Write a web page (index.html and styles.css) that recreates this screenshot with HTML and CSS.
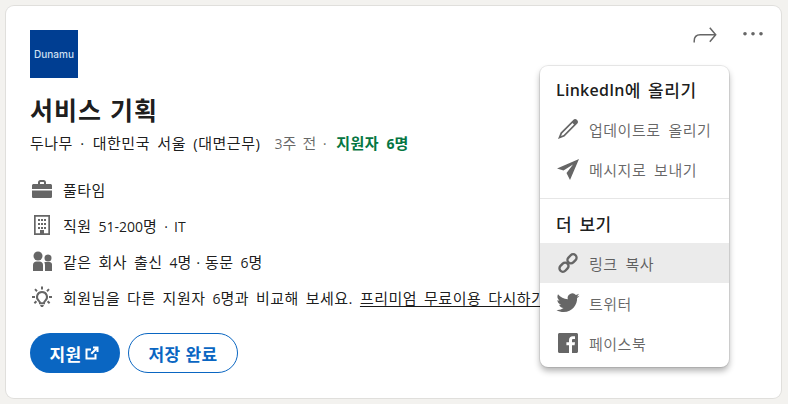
FILE: index.html
```html
<!DOCTYPE html>
<html lang="ko">
<head>
<meta charset="utf-8">
<title>서비스 기획</title>
<link rel="stylesheet" href="styles.css">
</head>
<body>
<main class="card">
  <div class="actions">
    <svg class="share" viewBox="0 0 24 24" width="24" height="24"><path d="M1.200 20.500v-1.500c0-3.800 2.300-6.300 6-6.300H22.500M16.800 5.700l5.900 7-5.900 7" fill="none" stroke="#666" stroke-width="1.500"/></svg>
    <svg class="more" viewBox="0 0 24 24" width="24" height="24"><circle cx="4" cy="11.700" r="1.800" fill="#666"/><circle cx="12" cy="11.700" r="1.800" fill="#666"/><circle cx="20" cy="11.700" r="1.800" fill="#666"/></svg>
  </div>
  <div class="logo"><span>Dunamu</span></div>
  <h1>서비스 기획</h1>
  <p class="meta"><span>두나무 ·</span><span class="loc">대한민국 서울 (대면근무)</span><span class="time"><span class="lat">3</span>주 전 ·</span><strong>지원자 <span class="lat">6</span>명</strong></p>
  <ul class="facts">
    <li><svg viewBox="0 0 24 24" width="24" height="24"><path d="M2 12V8.600C2 7.700 2.700 7 3.600 7H8V5.400C8 4 9 3 10.400 3h3.200C15 3 16 4 16 5.400V7h4.400C21.300 7 22 7.700 22 8.600V12zM10 7h4V5.500c0-.3-.2-.5-.5-.5h-3c-.3 0-.5.2-.5.500zM2 13.500h20v5.900c0 .9-.7 1.600-1.600 1.600H3.600C2.700 21 2 20.300 2 19.400z" fill="#666" fill-rule="evenodd"/></svg><span>풀타임</span></li>
    <li><svg viewBox="0 0 24 24" width="24" height="24"><path d="M4 2h16v20H4zM5.700 3.700v16.600h4.300V17h4v3.300h4.300V3.700zM8 6h2v2H8zm3 0h2v2h-2zm3 0h2v2h-2zM8 10h2v2H8zm3 0h2v2h-2zm3 0h2v2h-2zM8 14h2v2H8zm3 0h2v2h-2zm3 0h2v2h-2z" fill="#666" fill-rule="evenodd"/></svg><span>직원 <span class="lat">51-200</span>명 <span class="lat">· IT</span></span></li>
    <li><svg viewBox="0 0 24 24" width="24" height="24"><circle cx="8" cy="7" r="4.500" fill="#666"/><circle cx="18" cy="9" r="3.500" fill="#666"/><path d="M3 22v-6c0-2 1.500-3.500 3.500-3.500h3c2 0 3.500 1.500 3.500 3.500v6zM15 22v-6c0-1.200-.3-2-.8-2.600.6-.3 1.300-.4 2-.4h3.300c1.500 0 2.500 1 2.500 2.500V22z" fill="#666"/></svg><span>같은 회사 출신 <span class="lat">4</span>명<span class="dot"> · </span>동문 <span class="lat">6</span>명</span></li>
    <li><svg viewBox="0 0 24 24" width="24" height="24"><path d="M12 7a5 5 0 0 0-3 9c.7.600 1 1.200 1 2.200h4c0-1 .3-1.600 1-2.200a5 5 0 0 0-3-9z" fill="none" stroke="#666" stroke-width="2"/><path d="M10 20h4l-1 2h-2zM11 1.500h2v3h-2zM4.300 4.800l1.400-1.400L7.700 5.500 6.300 6.900zM18.300 3.400l1.400 1.400-2 2.100-1.400-1.400zM2 11h3v2H2zM19 11h3v2h-3zM5.700 15.600l1.400 1.400-2 2-1.400-1.400zM18.300 15.600l2 2-1.400 1.400-2-2z" fill="#666"/></svg><span class="clip">회원님을 다른 지원자 <span class="lat">6</span>명과 비교해 보세요. <u>프리미엄 무료이용 다시하기</u></span></li>
  </ul>
  <div class="buttons">
    <button class="btn primary">지원 <svg viewBox="0 0 16 16" width="16" height="16"><path d="M9 1.500h5.500V7h-2V5L8 9.500 6.500 8 11 3.500H9zM1.500 3.500H7v2H3.500v7h7V9h2v5.500h-11z" fill="#fff"/></svg></button>
    <button class="btn outline">저장 완료</button>
  </div>
  <nav class="menu">
    <h2 class="first"><span class="lat-h">LinkedIn</span>에 올리기</h2>
    <a class="item"><svg viewBox="0 0 24 24" width="24" height="24"><path d="M21.100 2.900c-1.200-1.200-2.800-1.200-3.900 0L4.600 15.500 2 22l6.500-2.600L21.100 6.800c1.200-1.100 1.200-2.700 0-3.900zM7.600 18l-2.500 1 1-2.500L16.500 6l1.500 1.500z" fill="#666" fill-rule="evenodd"/></svg><span>업데이트로 올리기</span></a>
    <a class="item"><svg viewBox="0 0 24 24" width="24" height="24"><path d="M23 2 1 11.500l6.500 2L17 7.500 10.500 16 14 23z" fill="#666"/></svg><span>메시지로 보내기</span></a>
    <hr>
    <h2>더 보기</h2>
    <a class="item active"><svg viewBox="0 0 24 24" width="24" height="24"><g fill="none" stroke="#666" stroke-width="2.400"><rect x="3" y="12.800" width="10" height="6.800" rx="3.400" transform="rotate(-45 8 16.200)"/><rect x="11" y="4.400" width="10" height="6.800" rx="3.400" transform="rotate(-45 16 7.800)"/></g></svg><span>링크 복사</span></a>
    <a class="item"><svg viewBox="0 0 24 24" width="24" height="24"><path d="M23.500 4.700c-.9.400-1.800.6-2.700.7 1-.6 1.700-1.500 2.100-2.600-.9.600-1.900 1-3 1.200a4.700 4.700 0 0 0-8.100 4.300C7.900 8.100 4.400 6.200 2 3.300c-1.200 2.200-.6 4.900 1.500 6.300-.8 0-1.500-.2-2.100-.6 0 2.300 1.600 4.300 3.800 4.700-.7.200-1.400.2-2.100.1.600 1.900 2.300 3.200 4.400 3.300A9.600 9.600 0 0 1 .5 18.900C2.600 20.300 5.100 21 7.700 21c8.700 0 13.700-7.400 13.400-14 1-.6 1.800-1.400 2.400-2.300z" fill="#666"/></svg><span>트위터</span></a>
    <a class="item"><svg viewBox="0 0 24 24" width="24" height="24"><path d="M3.500 2h17C21.300 2 22 2.700 22 3.500v17c0 .8-.7 1.500-1.500 1.500H16v-7.700h2.600l.4-3H16V9.400c0-.9.300-1.400 1.500-1.400H19V5.300c-.3 0-1.200-.1-2.200-.1-2.300 0-3.800 1.400-3.800 3.900v2.200h-2.600v3H13V22H3.500C2.700 22 2 21.300 2 20.500v-17C2 2.700 2.700 2 3.500 2z" fill="#666"/></svg><span>페이스북</span></a>
  </nav>
</main>
</body>
</html>
```
FILE: styles.css
```css
* { box-sizing: border-box; }
html, body { margin: 0; height: 100%; }
body {
  background: #f3f2ef;
  padding: 6px 7px 6px 6px;
  font-family: "Open Sans", "Noto Sans CJK KR", sans-serif;
  overflow: hidden;
}
.card {
  position: relative;
  height: 392px;
  background: #fff;
  border-radius: 8px;
  box-shadow: 0 0 0 1px rgba(0,0,0,.08);
  padding: 24px;
  overflow: hidden;
}
.lat { font-size: 14px; letter-spacing: 0; }
.dot { word-spacing: 0; }
.actions {
  position: absolute;
  top: 16px;
  right: 16px;
  display: flex;
  gap: 24px;
}
.share, .more { display: block; }
.logo {
  width: 48px;
  height: 48px;
  background: #003e92;
  display: flex;
  align-items: center;
  justify-content: center;
}
.logo span {
  color: #cfe0f2;
  font: 500 10px/1 "Inter", sans-serif;
}
h1 {
  margin: 13px 0 0;
  font: 700 25px/36px "Noto Sans CJK KR", sans-serif;
  letter-spacing: 1px;
  color: rgba(0,0,0,.9);
}
.meta {
  margin: 6px 0 0;
  font-size: 15px;
  letter-spacing: .5px;
  word-spacing: 3px;
  line-height: 20px;
  color: rgba(0,0,0,.9);
}
.loc { margin-left: 8px; }
.time { color: rgba(0,0,0,.6); margin-left: 14px; word-spacing: 1.500px; }
.meta strong { color: #057642; font-weight: 700; margin-left: 9px; }
.facts {
  list-style: none;
  margin: 23px 0 0;
  padding: 0;
  display: flex;
  flex-direction: column;
  gap: 12px;
}
.facts li {
  display: flex;
  align-items: center;
  gap: 9px;
  height: 24px;
  font-size: 15px;
  letter-spacing: .5px;
  word-spacing: 2.500px;
  color: rgba(0,0,0,.9);
  white-space: nowrap;
}
.facts u { text-underline-offset: 2px; }
.buttons {
  display: flex;
  gap: 8px;
  margin-top: 24px;
}
.btn {
  height: 40px;
  border-radius: 20px;
  font: 700 17px/1 "Noto Sans CJK KR", sans-serif;
  letter-spacing: .3px;
  display: flex;
  align-items: center;
  justify-content: center;
  gap: 3px;
}
.primary { width: 90px; background: #0a66c2; color: #fff; border: 0; }
.outline { width: 110px; background: #fff; color: #0a66c2; border: 1px solid #0a66c2; }
.menu {
  position: absolute;
  left: 534px;
  top: 60px;
  width: 189px;
  height: 301px;
  background: #fff;
  border-radius: 8px;
  box-shadow: 0 0 0 1px rgba(0,0,0,.08), 0 4px 6px rgba(0,0,0,.3);
  padding-top: 4px;
}
.menu h2 {
  margin: 0;
  padding: 0 16px;
  height: 39px;
  display: flex;
  align-items: center;
  white-space: pre;
  font: 500 17px/1 "Noto Sans CJK KR", sans-serif;
  letter-spacing: .5px;
  word-spacing: 2px;
  color: rgba(0,0,0,.9);
}
.lat-h { font: 600 16px/1 "Open Sans", sans-serif; letter-spacing: .25px; }
.menu hr {
  margin: 9px 0 5px;
  border: 0;
  border-top: 1px solid #e6e6e6;
}
.item {
  height: 40px;
  padding: 0 16px;
  display: flex;
  align-items: center;
  gap: 9px;
  font-size: 15px;
  letter-spacing: .5px;
  word-spacing: 3.500px;
  color: rgba(0,0,0,.6);
}
.item svg { flex: none; width: 24px; height: 24px; }
.active { background: #ebebeb; }
```
